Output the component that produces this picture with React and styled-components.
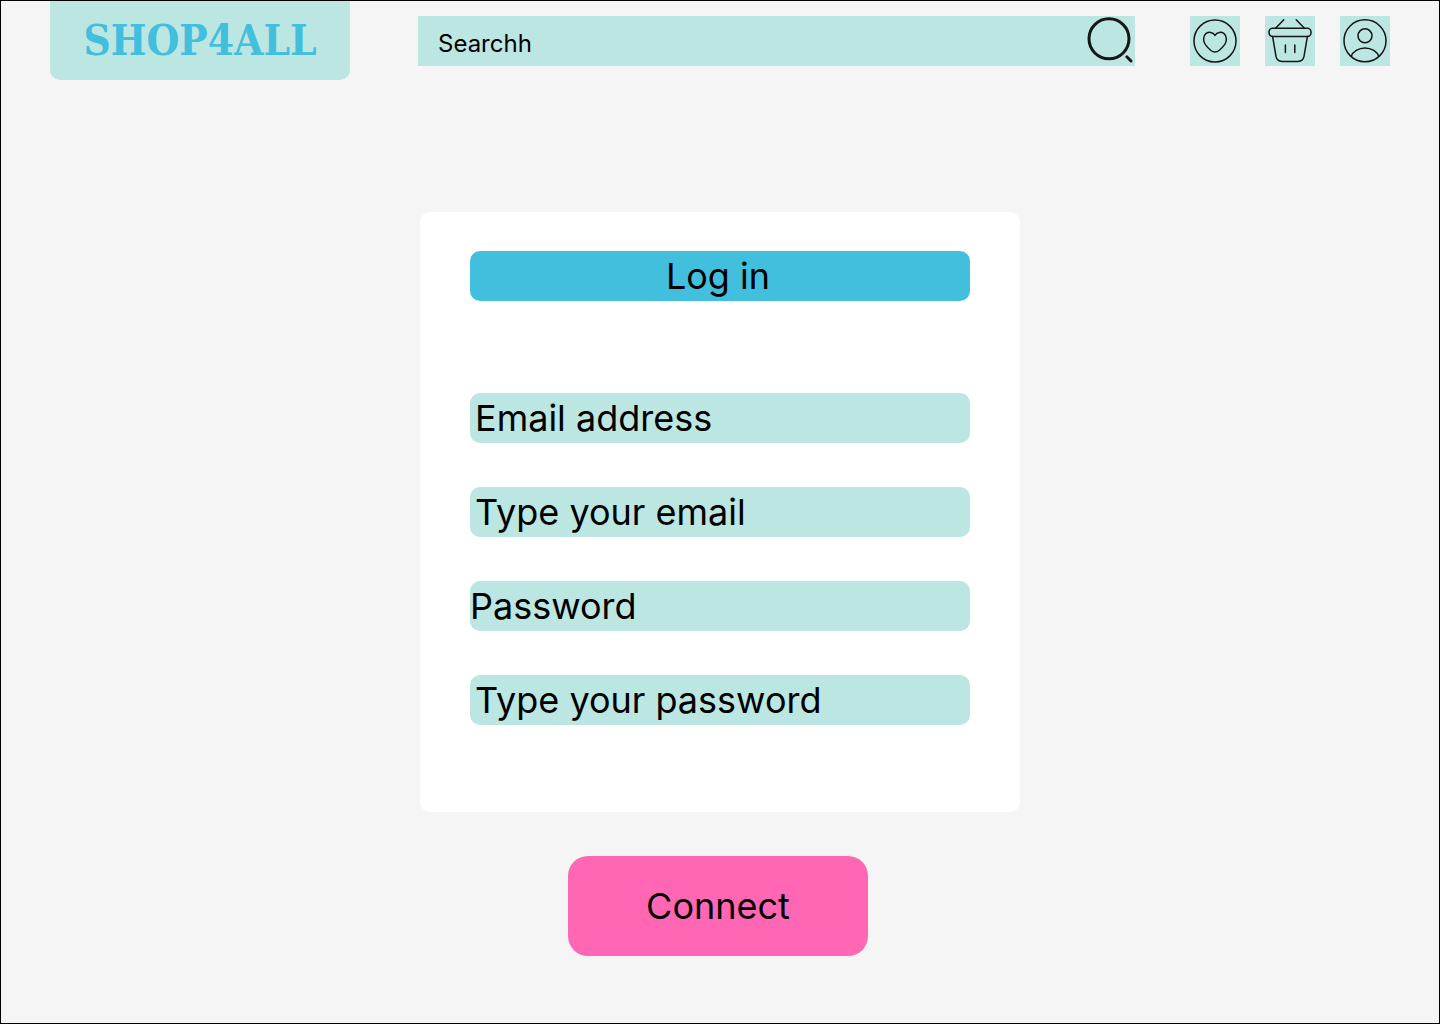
import React from "react";
import styled, { createGlobalStyle } from "styled-components";

const colors = {
  mint: "#bce6e2",
  blue: "#43bfde",
  pink: "#ff66b3",
  page: "#f5f5f5",
  ink: "#161616",
};

const GlobalStyle = createGlobalStyle`
  *, *::before, *::after { box-sizing: border-box; }
  body { margin: 0; }
  body, button, input {
    font-family: Inter, "Liberation Sans", sans-serif;
    font-weight: 400;
    color: #000;
  }
`;

const Page = styled.div`
  display: flex;
  flex-direction: column;
  min-height: 100vh;
  background: ${colors.page};
  border: 1px solid #000;
`;

const Header = styled.header`
  display: flex;
  align-items: flex-start;
  padding: 0 49px;
`;

const Logo = styled.a`
  display: flex;
  align-items: center;
  justify-content: center;
  flex: 0 0 300px;
  height: 79px;
  border-radius: 0 0 10px 10px;
  background: ${colors.mint};
  color: ${colors.blue};
  font: bold 42px "DejaVu Serif Condensed", "DejaVu Serif", serif;
  text-decoration: none;
`;

const Search = styled.form`
  display: flex;
  flex: 1;
  min-width: 0;
  height: 50px;
  margin: 15px 55px 0 68px;
  background: ${colors.mint};
`;

const SearchInput = styled.input`
  flex: 1;
  min-width: 0;
  padding: 4px 20px 0;
  border: 0;
  background: transparent;
  font-size: 24px;

  &::placeholder { color: #000; opacity: 1; }
`;

const IconButton = styled.button`
  width: 50px;
  height: 50px;
  padding: 0;
  border: 0;
  background: ${colors.mint};
  cursor: pointer;
`;

const Actions = styled.nav`
  display: flex;
  gap: 25px;
  padding-top: 15px;
`;

const Icon = styled.svg.attrs({ viewBox: "0 0 50 50", "aria-hidden": true })`
  display: block;
  width: 50px;
  height: 50px;
  fill: none;
  stroke: ${colors.ink};
  stroke-width: ${(p) => p.$weight || 1.5};
  stroke-linecap: round;
  stroke-linejoin: round;
`;

const Login = styled.form`
  display: flex;
  flex-direction: column;
  align-items: center;
  gap: 44px;
  padding: 132px 20px 67px;
`;

const Card = styled.section`
  display: flex;
  flex-direction: column;
  gap: 44px;
  width: 100%;
  max-width: 600px;
  padding: 39px 50px 87px;
  border-radius: 10px;
  background: #fff;
`;

const Title = styled.h1`
  margin: 0 0 48px;
  padding-right: 4px;
  border-radius: 10px;
  background: ${colors.blue};
  font-size: 36px;
  font-weight: 400;
  line-height: 50px;
  text-align: center;
`;

const Label = styled.label`
  padding: 0 ${(p) => (p.$flush ? 0 : 5)}px;
  border-radius: 10px;
  background: ${colors.mint};
  font-size: 36px;
  line-height: 50px;
`;

const Field = styled.input`
  width: 100%;
  height: 50px;
  padding: 0 5px;
  border: 0;
  border-radius: 10px;
  background: ${colors.mint};
  font-size: 36px;

  &::placeholder { color: #000; opacity: 1; }
`;

const Connect = styled.button`
  width: 300px;
  height: 100px;
  margin-right: 4px;
  border: 0;
  border-radius: 20px;
  background: ${colors.pink};
  font-size: 36px;
  cursor: pointer;
`;

export default function App() {
  const stop = (e) => e.preventDefault();
  return (
    <>
      <GlobalStyle />
      <Page>
        <Header>
          <Logo href="#">SHOP4ALL</Logo>
          <Search role="search" onSubmit={stop}>
            <SearchInput type="search" placeholder="Searchh" aria-label="Search" />
            <IconButton type="submit" aria-label="Submit search">
              <Icon $weight={3}>
                <circle cx="24" cy="22.8" r="20" />
                <path d="M41.8 40.8 46 45" />
              </Icon>
            </IconButton>
          </Search>
          <Actions aria-label="Account">
            <IconButton type="button" aria-label="Favourites">
              <Icon>
                <circle cx="25" cy="25" r="21" />
                <path d="M25 19.4C22.8 15.8 18.6 15.8 16.2 17.4C12.8 20 13 25.2 15.4 28.6C17.8 31.8 22 36 25 36C28 36 32.2 31.8 34.6 28.6C37 25.2 37.2 20 33.8 17.4C31.4 15.8 27.2 15.8 25 19.4Z" />
              </Icon>
            </IconButton>
            <IconButton type="button" aria-label="Basket">
              <Icon>
                <path d="M18.8 3.8 10.8 12M31.2 3.8 39.2 12" />
                <rect x="4" y="12.2" width="42" height="8.2" rx="3.6" />
                <path d="M7.6 20.4 11 40.4C11.7 44 13.5 45.4 17 45.4H33C36.5 45.4 38.3 44 39 40.4L42.4 20.4" />
                <path d="M20.4 29V36.4M29.8 29V36.4" />
              </Icon>
            </IconButton>
            <IconButton type="button" aria-label="Profile">
              <Icon>
                <circle cx="25" cy="24.8" r="21" />
                <circle cx="25" cy="19.8" r="7" />
                <path d="M11.2 40.4C12.8 35.6 18.4 32 25 32C31.6 32 37.2 35.6 38.8 40.4" />
              </Icon>
            </IconButton>
          </Actions>
        </Header>
        <Login onSubmit={stop}>
          <Card>
            <Title>Log in</Title>
            <Label htmlFor="email">Email address</Label>
            <Field id="email" type="email" placeholder="Type your email" />
            <Label htmlFor="password" $flush>Password</Label>
            <Field id="password" type="password" placeholder="Type your password" />
          </Card>
          <Connect type="submit">Connect</Connect>
        </Login>
      </Page>
    </>
  );
}
